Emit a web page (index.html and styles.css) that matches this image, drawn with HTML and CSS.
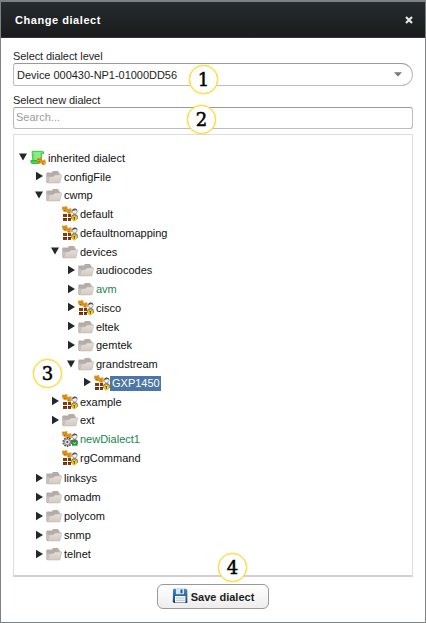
FILE: index.html
```html
<!DOCTYPE html>
<html lang="en">
<head>
<meta charset="utf-8">
<title>Change dialect</title>
<link rel="stylesheet" href="styles.css">
</head>
<body>
<svg class="defs" width="0" height="0" aria-hidden="true">
  <defs>
    <linearGradient id="blue" x2="0" y2="1"><stop stop-color="#438fce"/><stop offset="1" stop-color="#153f70"/></linearGradient>
    <linearGradient id="fold" x2="0" y2="1"><stop stop-color="#e6dfdb"/><stop offset="1" stop-color="#d3c8c2"/></linearGradient>
    <symbol id="down" viewBox="0 0 10 10"><path d="M1 1.500h8L5 8.500z" fill="#25282b"/></symbol>
    <symbol id="right" viewBox="0 0 10 10"><path d="M2 .8v8.400L9 5z" fill="#25282b"/></symbol>
    <symbol id="folder" viewBox="0 0 16 16">
      <path d="M.3 4.500q0-1 1-1h5V3q0-1 1-1h4.200q1 0 1 1v.5h1v2H15L13.500 14H1.500q-1.200 0-1.200-1z" fill="#b3aca8"/>
      <path d="M1 7.500h2.700L2 13H1z" fill="#c9c2be"/>
      <path d="M3.500 8L7.500 7.500 9 6h6.700l-1.700 7.500q-.2.500-1 .5H1.500z" fill="url(#fold)" stroke="#bdb2ad" stroke-width=".5"/>
    </symbol>
    <symbol id="masks" viewBox="0 0 10 8">
      <path d="M.3.800q2.200.6 4.500-.6l.7 3.500q-.2 2-2.300 2.300Q.8 5.500.3 3z" fill="#efa01c" stroke="#c67408" stroke-width=".4"/>
      <path d="M4.500 3q2 .4 4.400-.6l.9 2.900q0 2-2 2.500-2.600-.3-3-2z" fill="#f3aa27" stroke="#c67408" stroke-width=".4"/>
      <path d="M1.500 2.200h.8m1 0h.8M2 4.300h1.500M5.700 4.400h.8m1-.2h.8M6.200 6.200l1.500-.2" stroke="#653a00" stroke-width=".7"/>
    </symbol>
    <symbol id="person" viewBox="0 0 7 12">
      <path d="M.3 11V7.800l1.800-1.600h2.800L6.700 7.800V11z" fill="#66686b"/>
      <circle cx="3.700" cy="3.500" r="2.400" fill="#ededed" stroke="#777a7e" stroke-width=".6"/>
      <path d="M1.200 3Q1 .5 3.700.5T6.300 3L4.800 1.900z" fill="#505356"/>
    </symbol>
    <symbol id="dialect" viewBox="0 0 16 16">
      <path d="M1 8h4v3H1zM6 8h3v3H6zM1 12h4v3H1zM6 12h3v3H6z" fill="#813b10"/>
      <path d="M1 12.500h4m1 0h3" stroke="#5b2502"/>
      <use href="#masks" x="0" y="0" width="10" height="8"/>
      <use href="#person" x="9" y="2" width="7" height="12"/>
      <path d="M10 10l2.300-.8 2.700.8v3.200l-2.700 2L10 13.700z" fill="#ffd92b" stroke="#b58b00" stroke-width=".5"/>
      <path d="M11.300 10.700l1 1.200 1-1.200m-1 1.200v2" fill="none" stroke="#282000" stroke-width=".8"/>
    </symbol>
    <symbol id="geared" viewBox="0 0 16 16">
      <use href="#masks" x="0" y="0" width="10" height="8"/>
      <circle cx="5.300" cy="11" r="4" fill="#eee" stroke="#575757" stroke-width="1.800" stroke-dasharray="1.700 .8"/>
      <circle cx="5.300" cy="11" r="3" fill="#ddd" stroke="#777" stroke-width=".8"/>
      <circle cx="5.300" cy="11" r="1" fill="#444"/>
      <use href="#person" x="9" y="2" width="7" height="12"/>
      <path d="M10 10h5.500v4.700H10z" fill="#189b25"/><path d="M11.300 11.200l1.300 2 1.200-2" fill="none" stroke="#b5ffb5" stroke-width=".8"/>
    </symbol>
    <symbol id="scroll" viewBox="0 0 16 16">
      <path d="M2 1.300h10.300q1.700 0 1.500 2.400h-2.300v8.800H3z" fill="#6be269" stroke="#2ac035" stroke-width=".8"/>
      <path d="M3.500 3h7M4.500 5h6M4.500 7h6M4.500 9h4" stroke="#b6f7ac" stroke-width=".9"/>
      <path d="M.8 10.500h8.500v3H2Q.5 13 .8 10.500z" fill="#40d744" stroke="#1aa726" stroke-width=".7"/>
      <use href="#masks" x="6.500" y="6.800" width="9.500" height="9"/>
    </symbol>
  </defs>
</svg>
<main class="dialog">
  <header class="titlebar"><span>Change dialect</span>
    <svg class="close" viewBox="0 0 8 8"><path d="M1 1l6 6M7 1L1 7" stroke="#e6e6e6" stroke-width="2.200"/></svg>
  </header>
  <section class="content">
    <div class="label">Select dialect level</div>
    <div class="select"><span>Device 000430-NP1-01000DD56</span><svg viewBox="0 0 8 5"><path d="M0 .3h8L4 4.500z" fill="#777"/></svg></div>
    <div class="label second">Select new dialect</div>
    <div class="search">Search...</div>
    <div class="tree" id="tree"></div>
    <button class="save"><svg viewBox="0 0 16 16"><path d="M1 1.500l1-.7h12l1.300 1.200v13H2L.8 14z" fill="url(#blue)"/><path d="M4 .8h8v5.400H4z" fill="#d6e6f3"/><path d="M8.500 1.500h2v3.800h-2z" fill="#245b91"/><path d="M3 8h10.500v6.500H3z" fill="#f4f6f7"/><path d="M4 10h8.500M4 12.300h8.500" stroke="#aeb8c0" stroke-width=".8"/></svg>Save dialect</button>
  </section>
  <span class="badge one">1</span>
  <span class="badge two">2</span>
  <span class="badge three">3</span>
  <span class="badge four">4</span>
</main>
<script src="tree.js"></script>
</body>
</html>
```
FILE: styles.css
```css
* { box-sizing: border-box; }
body { margin: 0; font: 11px "Liberation Sans", Arial, sans-serif; color: #1d1d1d; }
.defs { position: absolute; }
.dialog { position: relative; width: 426px; height: 623px; border: 1px solid #7c8184; border-top-width: 2px; background: #fff; overflow: hidden; }
.titlebar { height: 36px; padding: 0 12px 0 14px; display: flex; align-items: center; justify-content: space-between; background: linear-gradient(#272c2f, #191b1c); border-bottom: 1px solid #303233; color: #fff; font-size: 11px; font-weight: bold; letter-spacing: .55px; }
.close { width: 8px; height: 8px; }
.content { padding: 12px 12px 0; }
.label { height: 13px; line-height: 13px; letter-spacing: -.08px; }
.second { margin-top: 8px; }
.select { height: 23px; display: flex; align-items: center; justify-content: space-between; padding: 0 10px 0 3px; border: 1px solid #bcbcbc; border-top-color: #999; border-radius: 3px 12px 12px 3px; letter-spacing: -.03px; }
.select svg { width: 8px; height: 5px; }
.search { height: 22px; line-height: 19px; padding-left: 2px; border: 1px solid #bcbcbc; border-top-color: #999; border-radius: 3px; color: #9b9b9f; }
.tree { height: 443px; margin-top: 5px; padding: 14px 0 0 5px; border: 1px solid #ddd; border-bottom: 2px solid #d2d2d2; color: #111; }
.row { height: 18.75px; display: flex; align-items: center; }
.row:nth-child(n + 18) { height: 19px; }
.row:nth-child(18) { margin-top: 1.500px; }
.level1 { padding-left: 16px; }
.level2 { padding-left: 32px; }
.level3 { padding-left: 48px; }
.level4 { padding-left: 64px; }
.arrow { width: 10px; height: 10px; margin: 0 2px 2px -1px; flex: none; }
.icon { width: 16px; height: 16px; margin-bottom: 1px; flex: none; }
.name { padding: 0 2px; line-height: 15px; }
.green { color: #17864d; }
.selected { padding-right: 1px; background: #4c76a3; color: #fff; }
.save { display: flex; align-items: center; justify-content: center; gap: 3px; width: 112px; height: 25px; margin: 7px auto 0; padding: 0; border: 1px solid #999; border-radius: 6px; background: linear-gradient(#fff, #ededed); font: bold 11px "Liberation Sans", Arial, sans-serif; color: #1d1d1d; }
.save svg { width: 16px; height: 16px; margin-bottom: 2px; }
.badge { position: absolute; display: flex; align-items: center; justify-content: center; width: 29px; height: 29px; border: 1px solid #f7d92f; border-radius: 50%; background: #fff; box-shadow: 0 0 2px #f5d94c; font: 18px "DejaVu Serif", serif; -webkit-text-stroke: .5px #000; color: #000; }
.one { left: 188px; top: 63px; }
.two { left: 186px; top: 103px; }
.three { left: 32px; top: 357px; }
.four { left: 217px; top: 551px; }
```
FILE: tree.js
```js
const rows = [
  [0, 'down', 'scroll', 'inherited dialect'],
  [1, 'right', 'folder', 'configFile'],
  [1, 'down', 'folder', 'cwmp'],
  [2, '', 'dialect', 'default'],
  [2, '', 'dialect', 'defaultnomapping'],
  [2, 'down', 'folder', 'devices'],
  [3, 'right', 'folder', 'audiocodes'],
  [3, 'right', 'folder', 'avm', 'green'],
  [3, 'right', 'dialect', 'cisco'],
  [3, 'right', 'folder', 'eltek'],
  [3, 'right', 'folder', 'gemtek'],
  [3, 'down', 'folder', 'grandstream'],
  [4, 'right', 'dialect', 'GXP1450', 'selected'],
  [2, 'right', 'dialect', 'example'],
  [2, 'right', 'folder', 'ext'],
  [2, '', 'geared', 'newDialect1', 'green'],
  [2, '', 'dialect', 'rgCommand'],
  [1, 'right', 'folder', 'linksys'],
  [1, 'right', 'folder', 'omadm'],
  [1, 'right', 'folder', 'polycom'],
  [1, 'right', 'folder', 'snmp'],
  [1, 'right', 'folder', 'telnet']
];

document.getElementById('tree').innerHTML = rows.map(([level, arrow, icon, name, state = '']) =>
  `<div class="row level${level}"><svg class="arrow">${arrow ? `<use href="#${arrow}"/>` : ''}</svg><svg class="icon"><use href="#${icon}"/></svg><span class="name ${state}">${name}</span></div>`
).join('');
```
